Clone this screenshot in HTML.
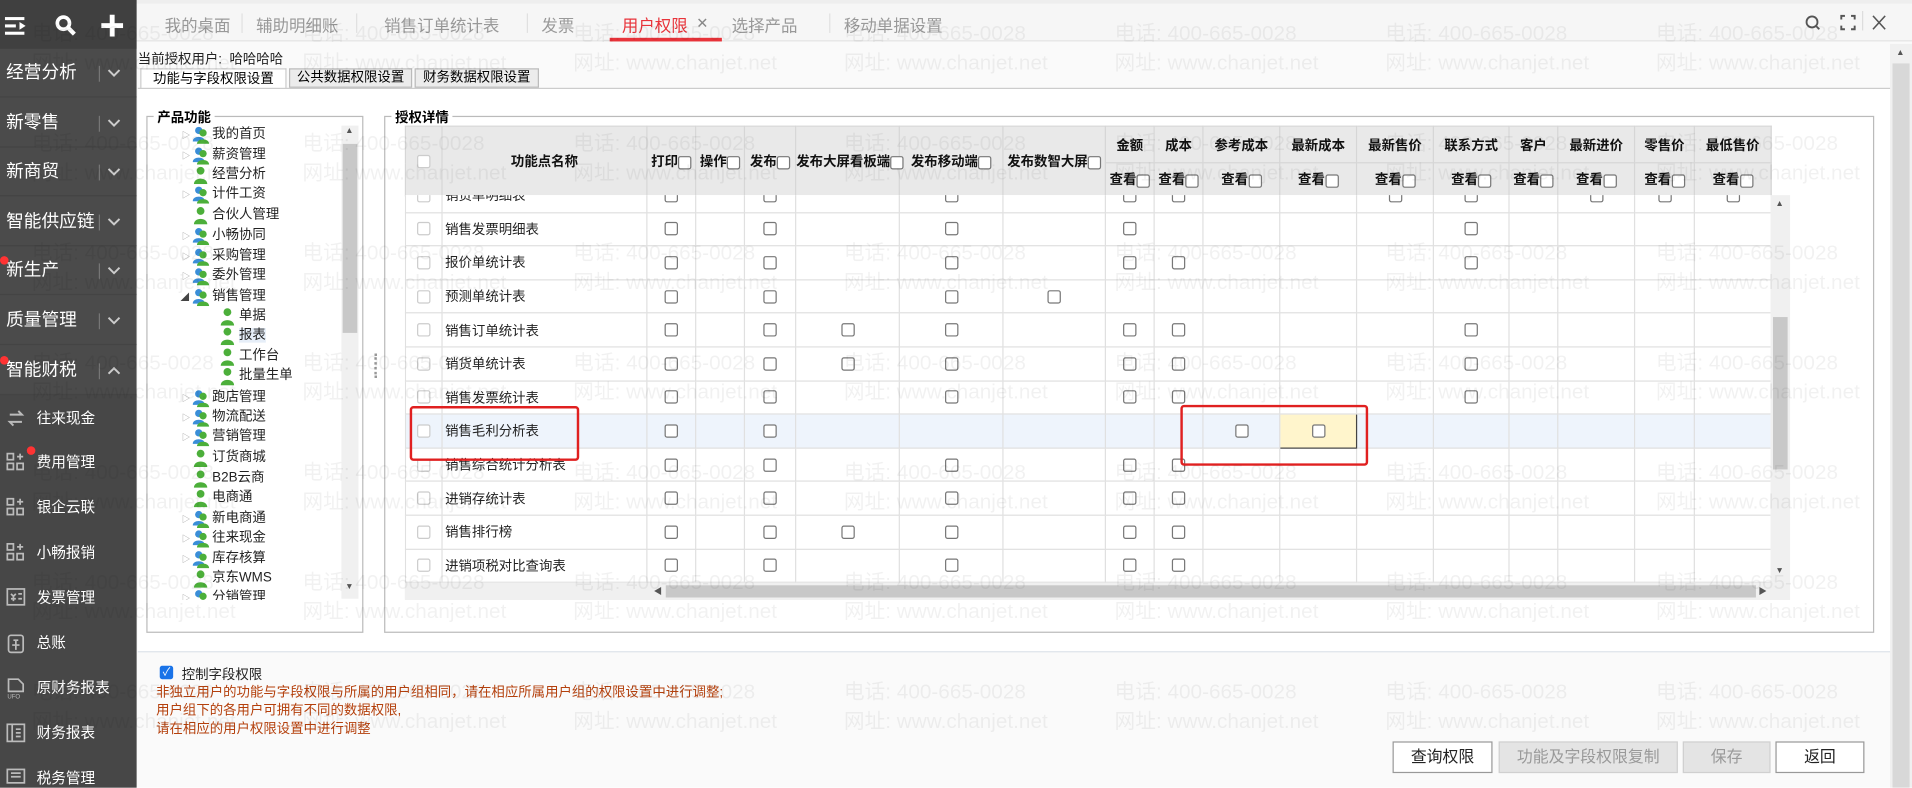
<!DOCTYPE html>
<html><head><meta charset="utf-8">
<style>
*{box-sizing:border-box;margin:0;padding:0}
html,body{width:1912px;height:788px;overflow:hidden;background:#fff;font-family:"Liberation Sans","Noto Sans CJK SC",sans-serif}
#w{position:absolute;left:0;top:0;width:1568px;height:646px;transform:scale(1.21939);transform-origin:0 0;background:#fafafa;overflow:hidden}
.a{position:absolute}
#sb{left:0;top:0;width:112px;height:646px;background:#4b4b4b;color:#fff}
#sbt{left:0;top:0;width:112px;height:40px;background:#404040}
.mi{position:absolute;left:0;width:112px;height:40px;font-size:14.5px;line-height:40px;padding-left:5px;border-bottom:1px solid #444}
.mi .dv{position:absolute;left:81px;top:14px;width:1px;height:13px;background:#777}
.mi svg{position:absolute;left:88px;top:16px}
.si{position:absolute;left:0;width:112px;height:37px;font-size:12px;line-height:37px;padding-left:30px;color:#fff}
.si svg{position:absolute;left:5px;top:10px}
.dot{position:absolute;width:7px;height:7px;border-radius:50%;background:#f33}
.tab{position:absolute;top:10px;font-size:13.5px;color:#999}
.sep{position:absolute;top:11px;width:1px;height:16px;background:#e0e0e0}
.cb{display:inline-block;width:11px;height:11px;border:1px solid #777;border-radius:2px;background:#fff;vertical-align:middle}
.cbg{border-color:#ccc}
.tr{position:absolute;font-size:11px;color:#222;height:16px;line-height:16px}
.tr .ic{display:inline-block;width:14px;height:15px;vertical-align:middle;margin-right:2px}
.tri{position:absolute;font-size:7px;color:#999}
table{border-collapse:collapse;table-layout:fixed}
#th td{background:#e9e9e9;border:1px solid #d6d6d6;font-size:11px;color:#111;text-align:center;padding:0;white-space:nowrap;font-weight:bold}
#tb td{border:1px solid #e0e0e0;font-size:11px;color:#222;text-align:center;padding:0;height:27.6px;white-space:nowrap;background:#fff}
#tb td.n{text-align:left;padding-left:2px}
#tb tr.hl td{background:#eef4fc}
.wm{position:absolute;left:0;width:1600px;font-size:17px;color:rgba(0,0,0,0.055);white-space:nowrap;pointer-events:none}
.wm span{display:inline-block;width:222px}
.btn{position:absolute;top:608px;height:26px;font-size:13px;line-height:24px;text-align:center;border:1px solid #999;background:#fff;color:#222}
.btn.d{background:#e4e4e4;color:#999;border-color:#d0d0d0}
</style></head><body><div id="w">

<div class="a" style="left:112px;top:0;width:1456px;height:34px;background:#f6f6f6;border-bottom:1px solid #e4e4e4"></div>
<div class="a" style="left:112px;top:0;width:1456px;height:3px;background:#eee"></div>
<div class="tab" style="left:135px">我的桌面</div><div class="sep" style="left:198px"></div>
<div class="tab" style="left:210px">辅助明细账</div><div class="sep" style="left:292px"></div>
<div class="tab" style="left:315px">销售订单统计表</div><div class="sep" style="left:432px"></div>
<div class="tab" style="left:444px">发票</div>
<div class="tab" style="left:510px;color:#e8333a">用户权限</div>
<div class="tab" style="left:571px;font-size:12px;top:12px;color:#888">✕</div>
<div class="a" style="left:500px;top:31px;width:92px;height:3px;background:#e8333a"></div>
<div class="tab" style="left:600px">选择产品</div><div class="sep" style="left:680px"></div>
<div class="tab" style="left:692px">移动单据设置</div>
<svg class="a" style="left:1480px;top:12px" width="14" height="14"><circle cx="6" cy="6" r="4.5" fill="none" stroke="#555" stroke-width="1.5"/><line x1="9.5" y1="9.5" x2="12" y2="12" stroke="#555" stroke-width="1.5"/></svg>
<svg class="a" style="left:1509px;top:12px" width="13" height="13" fill="none" stroke="#555" stroke-width="1.6"><path d="M1 4V1h3M9 1h3v3M12 9v3H9M4 12H1V9"/></svg>
<div class="a" style="left:1527px;top:9px;width:1px;height:16px;background:#ddd"></div>
<svg class="a" style="left:1535px;top:12px" width="12" height="13" stroke="#555" stroke-width="1.3"><path d="M1 1l10 11M11 1L1 12"/></svg>

<div class="a" style="left:1550px;top:36px;width:18px;height:610px;background:#f0f0f0"></div>
<div class="a" style="left:1552px;top:52px;width:14px;height:594px;background:#d8d8d8"></div>
<div class="a" style="left:1555px;top:40px;font-size:7px;color:#555">▲</div>

<div class="a" style="left:113px;top:40px;font-size:11px;color:#222">当前授权用户: &nbsp;哈哈哈哈</div>
<div class="a" style="left:115px;top:56px;width:120px;height:17px;background:#fff;border:1px solid #ccc;border-bottom:none;font-size:11px;line-height:16px;text-align:center">功能与字段权限设置</div>
<div class="a" style="left:237px;top:56px;width:101px;height:16px;background:#ececec;border:1px solid #bbb;font-size:11px;line-height:15px;text-align:center">公共数据权限设置</div>
<div class="a" style="left:340px;top:56px;width:102px;height:16px;background:#ececec;border:1px solid #bbb;font-size:11px;line-height:15px;text-align:center">财务数据权限设置</div>
<div class="a" style="left:113px;top:72px;width:1437px;height:1px;background:#ccc"></div>
<div class="a" style="left:113px;top:73px;width:1437px;height:462px;background:#fff;border-bottom:1px solid #dde3ea"></div>

<div class="a" style="left:120px;top:95px;width:178px;height:424px;border:1px solid #bbb"></div>
<div class="a" style="left:126px;top:88px;padding:0 3px;background:#fff;font-size:11px;font-weight:bold">产品功能</div>
<div class="a" style="left:280px;top:103px;width:14px;height:388px;background:#f0f0f0"></div>
<div class="a" style="left:281px;top:118px;width:12px;height:155px;background:#c8c8c8"></div>
<div class="a" style="left:283px;top:104px;font-size:7px;color:#555">▲</div>
<div class="a" style="left:283px;top:478px;font-size:7px;color:#555">▼</div>
<div class="a" style="left:307px;top:290px;width:2px;height:20px;border-left:2px dotted #999"></div>

<div class="a" style="left:315px;top:95px;width:1222px;height:424px;border:1px solid #bbb"></div>
<div class="a" style="left:321px;top:88px;padding:0 3px;background:#fff;font-size:11px;font-weight:bold">授权详情</div>

<table id="th" class="a" style="left:332px;top:103px;width:1120px">
<colgroup><col style="width:30px"><col style="width:168px"><col style="width:40px"><col style="width:40px"><col style="width:42px"><col style="width:85px"><col style="width:85px"><col style="width:84px"><col style="width:40px"><col style="width:40px"><col style="width:63px"><col style="width:63px"><col style="width:63px"><col style="width:62px"><col style="width:40px"><col style="width:63px"><col style="width:49px"><col style="width:63px"></colgroup>
<tr style="height:30px"><td rowspan="2"><span class="cb cbg"></span></td><td rowspan="2">功能点名称</td><td rowspan="2">打印<span class="cb"></span></td><td rowspan="2">操作<span class="cb"></span></td><td rowspan="2">发布<span class="cb"></span></td><td rowspan="2">发布大屏看板端<span class="cb"></span></td><td rowspan="2">发布移动端<span class="cb"></span></td><td rowspan="2">发布数智大屏<span class="cb"></span></td><td>金额</td><td>成本</td><td>参考成本</td><td>最新成本</td><td>最新售价</td><td>联系方式</td><td>客户</td><td>最新进价</td><td>零售价</td><td>最低售价</td></tr>
<tr style="height:27px"><td>查看<span class="cb"></span></td><td>查看<span class="cb"></span></td><td>查看<span class="cb"></span></td><td>查看<span class="cb"></span></td><td>查看<span class="cb"></span></td><td>查看<span class="cb"></span></td><td>查看<span class="cb"></span></td><td>查看<span class="cb"></span></td><td>查看<span class="cb"></span></td><td>查看<span class="cb"></span></td></tr>
</table>

<div class="a" style="left:332px;top:160px;width:1120px;height:318px;overflow:hidden;background:#fff">
<table id="tb" class="a" style="left:0;top:-14px;width:1120px">
<colgroup><col style="width:30px"><col style="width:168px"><col style="width:40px"><col style="width:40px"><col style="width:42px"><col style="width:85px"><col style="width:85px"><col style="width:84px"><col style="width:40px"><col style="width:40px"><col style="width:63px"><col style="width:63px"><col style="width:63px"><col style="width:62px"><col style="width:40px"><col style="width:63px"><col style="width:49px"><col style="width:63px"></colgroup>
<tr><td><span class="cb cbg"></span></td><td class="n">销货单明细表</td><td><span class="cb"></span></td><td></td><td><span class="cb"></span></td><td></td><td><span class="cb"></span></td><td></td><td><span class="cb"></span></td><td><span class="cb"></span></td><td></td><td></td><td><span class="cb"></span></td><td><span class="cb"></span></td><td></td><td><span class="cb"></span></td><td><span class="cb"></span></td><td><span class="cb"></span></td></tr>
<tr><td><span class="cb cbg"></span></td><td class="n">销售发票明细表</td><td><span class="cb"></span></td><td></td><td><span class="cb"></span></td><td></td><td><span class="cb"></span></td><td></td><td><span class="cb"></span></td><td></td><td></td><td></td><td></td><td><span class="cb"></span></td><td></td><td></td><td></td><td></td></tr>
<tr><td><span class="cb cbg"></span></td><td class="n">报价单统计表</td><td><span class="cb"></span></td><td></td><td><span class="cb"></span></td><td></td><td><span class="cb"></span></td><td></td><td><span class="cb"></span></td><td><span class="cb"></span></td><td></td><td></td><td></td><td><span class="cb"></span></td><td></td><td></td><td></td><td></td></tr>
<tr><td><span class="cb cbg"></span></td><td class="n">预测单统计表</td><td><span class="cb"></span></td><td></td><td><span class="cb"></span></td><td></td><td><span class="cb"></span></td><td><span class="cb"></span></td><td></td><td></td><td></td><td></td><td></td><td></td><td></td><td></td><td></td><td></td></tr>
<tr><td><span class="cb cbg"></span></td><td class="n">销售订单统计表</td><td><span class="cb"></span></td><td></td><td><span class="cb"></span></td><td><span class="cb"></span></td><td><span class="cb"></span></td><td></td><td><span class="cb"></span></td><td><span class="cb"></span></td><td></td><td></td><td></td><td><span class="cb"></span></td><td></td><td></td><td></td><td></td></tr>
<tr><td><span class="cb cbg"></span></td><td class="n">销货单统计表</td><td><span class="cb"></span></td><td></td><td><span class="cb"></span></td><td><span class="cb"></span></td><td><span class="cb"></span></td><td></td><td><span class="cb"></span></td><td><span class="cb"></span></td><td></td><td></td><td></td><td><span class="cb"></span></td><td></td><td></td><td></td><td></td></tr>
<tr><td><span class="cb cbg"></span></td><td class="n">销售发票统计表</td><td><span class="cb"></span></td><td></td><td><span class="cb"></span></td><td></td><td><span class="cb"></span></td><td></td><td><span class="cb"></span></td><td><span class="cb"></span></td><td></td><td></td><td></td><td><span class="cb"></span></td><td></td><td></td><td></td><td></td></tr>
<tr class="hl"><td><span class="cb cbg"></span></td><td class="n">销售毛利分析表</td><td><span class="cb"></span></td><td></td><td><span class="cb"></span></td><td></td><td></td><td></td><td></td><td></td><td><span class="cb"></span></td><td style="background:#fff5cc;border:1px solid #444"><span class="cb"></span></td><td></td><td></td><td></td><td></td><td></td><td></td></tr>
<tr><td><span class="cb cbg"></span></td><td class="n">销售综合统计分析表</td><td><span class="cb"></span></td><td></td><td><span class="cb"></span></td><td></td><td><span class="cb"></span></td><td></td><td><span class="cb"></span></td><td><span class="cb"></span></td><td></td><td></td><td></td><td></td><td></td><td></td><td></td><td></td></tr>
<tr><td><span class="cb cbg"></span></td><td class="n">进销存统计表</td><td><span class="cb"></span></td><td></td><td><span class="cb"></span></td><td></td><td><span class="cb"></span></td><td></td><td><span class="cb"></span></td><td><span class="cb"></span></td><td></td><td></td><td></td><td></td><td></td><td></td><td></td><td></td></tr>
<tr><td><span class="cb cbg"></span></td><td class="n">销售排行榜</td><td><span class="cb"></span></td><td></td><td><span class="cb"></span></td><td><span class="cb"></span></td><td><span class="cb"></span></td><td></td><td><span class="cb"></span></td><td><span class="cb"></span></td><td></td><td></td><td></td><td></td><td></td><td></td><td></td><td></td></tr>
<tr><td><span class="cb cbg"></span></td><td class="n">进销项税对比查询表</td><td><span class="cb"></span></td><td></td><td><span class="cb"></span></td><td></td><td><span class="cb"></span></td><td></td><td><span class="cb"></span></td><td><span class="cb"></span></td><td></td><td></td><td></td><td></td><td></td><td></td><td></td><td></td></tr>
<tr><td></td><td></td><td></td><td></td><td></td><td></td><td></td><td></td><td></td><td></td><td></td><td></td><td></td><td></td><td></td><td></td><td></td><td></td></tr>
</table></div>
<div class="a" style="left:1452px;top:160px;width:16px;height:318px;background:#f0f0f0"></div>
<div class="a" style="left:1454px;top:260px;width:12px;height:125px;background:#c8c8c8"></div>
<div class="a" style="left:1456px;top:164px;font-size:7px;color:#555">▲</div>
<div class="a" style="left:1456px;top:465px;font-size:7px;color:#555">▼</div>
<div class="a" style="left:332px;top:478px;width:1136px;height:14px;background:#f0f0f0"></div>
<div class="a" style="left:546px;top:480px;width:894px;height:10px;background:#c8c8c8"></div>
<div class="a" style="left:536px;top:480px;font-size:7px;color:#555">◀</div>
<div class="a" style="left:1442px;top:480px;font-size:7px;color:#555">▶</div>

<div class="a" style="left:336px;top:333px;width:139px;height:45px;border:2px solid #e02020;border-radius:3px"></div>
<div class="a" style="left:968px;top:332px;width:154px;height:50px;border:2px solid #e02020;border-radius:3px"></div>

<div class="a" style="left:131px;top:546px;width:11px;height:11px;background:#1a73e8;border-radius:2px;color:#fff;font-size:9px;line-height:11px;text-align:center">✓</div>
<div class="a" style="left:149px;top:545px;font-size:11px;color:#222">控制字段权限</div>
<div class="a" style="left:128px;top:561px;font-size:11px;color:#b4400c;line-height:15px">非独立用户的功能与字段权限与所属的用户组相同，请在相应所属用户组的权限设置中进行调整;<br>用户组下的各用户可拥有不同的数据权限,<br>请在相应的用户权限设置中进行调整</div>
<div class="btn" style="left:1142px;width:82px">查询权限</div>
<div class="btn d" style="left:1229px;width:147px">功能及字段权限复制</div>
<div class="btn d" style="left:1380px;width:72px">保存</div>
<div class="btn" style="left:1456px;width:73px">返回</div>

<div id="sb" class="a">
<div id="sbt" class="a"></div>
<svg class="a" style="left:4px;top:13px" width="20" height="16" fill="#fff"><rect x="0" y="1" width="16" height="2.5"/><rect x="0" y="7" width="9" height="2.5"/><rect x="0" y="13" width="16" height="2.5"/><path d="M12 5l5 3.2-5 3.2z"/></svg>
<svg class="a" style="left:45px;top:12px" width="18" height="18"><circle cx="7" cy="7" r="5" fill="none" stroke="#fff" stroke-width="3"/><line x1="11" y1="11" x2="16" y2="16" stroke="#fff" stroke-width="3.5"/></svg>
<svg class="a" style="left:83px;top:12px" width="18" height="18" fill="#fff"><rect x="7" y="0" width="4" height="18"/><rect x="0" y="7" width="18" height="4"/></svg>
<div class="mi" style="top:40px">经营分析<div class="dv"></div><svg width="11" height="8" fill="none" stroke="#ccc" stroke-width="1.6"><path d="M1 1.5l4.5 4.5 4.5-4.5"/></svg></div>
<div class="mi" style="top:81px">新零售<div class="dv"></div><svg width="11" height="8" fill="none" stroke="#ccc" stroke-width="1.6"><path d="M1 1.5l4.5 4.5 4.5-4.5"/></svg></div>
<div class="mi" style="top:121px">新商贸<div class="dv"></div><svg width="11" height="8" fill="none" stroke="#ccc" stroke-width="1.6"><path d="M1 1.5l4.5 4.5 4.5-4.5"/></svg></div>
<div class="mi" style="top:162px">智能供应链<div class="dv"></div><svg width="11" height="8" fill="none" stroke="#ccc" stroke-width="1.6"><path d="M1 1.5l4.5 4.5 4.5-4.5"/></svg></div>
<div class="mi" style="top:202px">新生产<div class="dv"></div><svg width="11" height="8" fill="none" stroke="#ccc" stroke-width="1.6"><path d="M1 1.5l4.5 4.5 4.5-4.5"/></svg></div>
<div class="mi" style="top:243px">质量管理<div class="dv"></div><svg width="11" height="8" fill="none" stroke="#ccc" stroke-width="1.6"><path d="M1 1.5l4.5 4.5 4.5-4.5"/></svg></div>
<div class="mi" style="top:284px">智能财税<div class="dv"></div><svg width="11" height="8" fill="none" stroke="#ccc" stroke-width="1.6"><path d="M1 6.5l4.5-4.5 4.5 4.5"/></svg></div>
<div class="dot" style="left:0;top:210px"></div>
<div class="dot" style="left:0;top:292px"></div>
<div class="a" style="left:0;top:324px;width:112px;height:322px;background:#474747"></div>
<div class="si" style="top:325px"><svg width="16" height="16" fill="none" stroke="#bbb" stroke-width="1.6"><path d="M3 5h10l-3-3M13 11H3l3 3"/></svg>往来现金</div>
<div class="si" style="top:361px"><svg width="16" height="16" fill="none" stroke="#bbb" stroke-width="1.4"><rect x="1" y="1" width="5" height="5"/><rect x="1" y="9" width="5" height="5"/><rect x="9" y="9" width="5" height="5"/><path d="M11.5 1v5M9 3.5h5"/></svg>费用管理</div>
<div class="dot" style="left:22px;top:366px"></div>
<div class="si" style="top:398px"><svg width="16" height="16" fill="none" stroke="#bbb" stroke-width="1.4"><rect x="1" y="1" width="5" height="5"/><rect x="1" y="9" width="5" height="5"/><rect x="9" y="9" width="5" height="5"/><path d="M11.5 1v5M9 3.5h5"/></svg>银企云联</div>
<div class="si" style="top:435px"><svg width="16" height="16" fill="none" stroke="#bbb" stroke-width="1.4"><rect x="1" y="1" width="5" height="5"/><rect x="1" y="9" width="5" height="5"/><rect x="9" y="9" width="5" height="5"/><path d="M11.5 1v5M9 3.5h5"/></svg>小畅报销</div>
<div class="si" style="top:472px"><svg width="18" height="16" fill="none" stroke="#bbb" stroke-width="1.4"><rect x="1" y="1" width="14" height="13"/><path d="M4 5l2 2 2-2M6 7v4M4 9h4M10 5h3M10 9h3"/></svg>发票管理</div>
<div class="si" style="top:509px"><svg width="16" height="18" fill="none" stroke="#bbb" stroke-width="1.4"><rect x="2" y="2" width="12" height="14" rx="2"/><path d="M6 6h4M8 6v8M5 10h6"/></svg>总账</div>
<div class="si" style="top:546px"><svg width="16" height="18" fill="none" stroke="#bbb" stroke-width="1.4"><path d="M2 1h8l4 4v6H2z"/><text x="1" y="17" font-size="5" fill="#bbb" stroke="none">UFO</text></svg>原财务报表</div>
<div class="si" style="top:583px"><svg width="16" height="16" fill="none" stroke="#bbb" stroke-width="1.4"><rect x="1" y="1" width="14" height="14"/><path d="M5 1v14M8 5h4M8 8h4M8 11h4"/></svg>财务报表</div>
<div class="si" style="top:620px"><svg width="16" height="14" fill="none" stroke="#bbb" stroke-width="1.4"><rect x="1" y="1" width="14" height="11"/><path d="M4 4h8M4 7h8"/></svg>税务管理</div>
</div>

<svg width="0" height="0" style="position:absolute"><defs>
<g id="g2"><circle cx="5" cy="4" r="3" fill="#3a8ed8"/><path d="M0 13c0-5 10-5 10 0z" fill="#3a8ed8"/><circle cx="8.5" cy="6" r="3" fill="#4caf3a"/><path d="M3.5 15c0-5 10-5 10 0z" fill="#4caf3a"/></g>
<g id="g1"><circle cx="6.5" cy="4" r="3.2" fill="#4caf3a"/><path d="M1 15c0-6 11-6 11 0z" fill="#4caf3a"/></g>
</defs></svg>
<div class="a" style="left:140px;top:102px;width:140px;height:390px;overflow:hidden">
<div class="tri" style="left:9px;top:4px">▷</div><div class="tr" style="left:18px;top:0"><svg class="ic" viewBox="0 0 14 15"><use href="#g2"/></svg>我的首页</div>
<div class="tri" style="left:9px;top:21px">▷</div><div class="tr" style="left:18px;top:17px"><svg class="ic" viewBox="0 0 14 15"><use href="#g2"/></svg>薪资管理</div>
<div class="tr" style="left:18px;top:33px"><svg class="ic" viewBox="0 0 14 15"><use href="#g1"/></svg>经营分析</div>
<div class="tri" style="left:9px;top:53px">▷</div><div class="tr" style="left:18px;top:49px"><svg class="ic" viewBox="0 0 14 15"><use href="#g2"/></svg>计件工资</div>
<div class="tr" style="left:18px;top:66px"><svg class="ic" viewBox="0 0 14 15"><use href="#g1"/></svg>合伙人管理</div>
<div class="tri" style="left:9px;top:87px">▷</div><div class="tr" style="left:18px;top:83px"><svg class="ic" viewBox="0 0 14 15"><use href="#g2"/></svg>小畅协同</div>
<div class="tri" style="left:9px;top:104px">▷</div><div class="tr" style="left:18px;top:100px"><svg class="ic" viewBox="0 0 14 15"><use href="#g2"/></svg>采购管理</div>
<div class="tri" style="left:9px;top:120px">▷</div><div class="tr" style="left:18px;top:116px"><svg class="ic" viewBox="0 0 14 15"><use href="#g2"/></svg>委外管理</div>
<div class="tri" style="left:8px;top:137px;color:#444">◢</div><div class="tr" style="left:18px;top:133px"><svg class="ic" viewBox="0 0 14 15"><use href="#g2"/></svg>销售管理</div>
<div class="tr" style="left:40px;top:149px"><svg class="ic" viewBox="0 0 14 15"><use href="#g1"/></svg>单据</div>
<div class="tr" style="left:40px;top:165px"><svg class="ic" viewBox="0 0 14 15"><use href="#g1"/></svg><span style="background:#e6eef8">报表</span></div>
<div class="tr" style="left:40px;top:182px"><svg class="ic" viewBox="0 0 14 15"><use href="#g1"/></svg>工作台</div>
<div class="tr" style="left:40px;top:198px"><svg class="ic" viewBox="0 0 14 15"><use href="#g1"/></svg>批量生单</div>
<div class="tri" style="left:9px;top:220px">▷</div><div class="tr" style="left:18px;top:216px"><svg class="ic" viewBox="0 0 14 15"><use href="#g2"/></svg>跑店管理</div>
<div class="tri" style="left:9px;top:236px">▷</div><div class="tr" style="left:18px;top:232px"><svg class="ic" viewBox="0 0 14 15"><use href="#g2"/></svg>物流配送</div>
<div class="tri" style="left:9px;top:252px">▷</div><div class="tr" style="left:18px;top:248px"><svg class="ic" viewBox="0 0 14 15"><use href="#g2"/></svg>营销管理</div>
<div class="tr" style="left:18px;top:265px"><svg class="ic" viewBox="0 0 14 15"><use href="#g1"/></svg>订货商城</div>
<div class="tr" style="left:18px;top:282px"><svg class="ic" viewBox="0 0 14 15"><use href="#g1"/></svg>B2B云商</div>
<div class="tr" style="left:18px;top:298px"><svg class="ic" viewBox="0 0 14 15"><use href="#g1"/></svg>电商通</div>
<div class="tri" style="left:9px;top:319px">▷</div><div class="tr" style="left:18px;top:315px"><svg class="ic" viewBox="0 0 14 15"><use href="#g2"/></svg>新电商通</div>
<div class="tri" style="left:9px;top:335px">▷</div><div class="tr" style="left:18px;top:331px"><svg class="ic" viewBox="0 0 14 15"><use href="#g2"/></svg>往来现金</div>
<div class="tri" style="left:9px;top:352px">▷</div><div class="tr" style="left:18px;top:348px"><svg class="ic" viewBox="0 0 14 15"><use href="#g2"/></svg>库存核算</div>
<div class="tr" style="left:18px;top:364px"><svg class="ic" viewBox="0 0 14 15"><use href="#g1"/></svg>京东WMS</div>
<div class="tri" style="left:9px;top:384px">▷</div><div class="tr" style="left:18px;top:380px"><svg class="ic" viewBox="0 0 14 15"><use href="#g2"/></svg>分销管理</div>
</div>

<div class="wm" style="top:13px;left:26px"><span>电话: 400-665-0028</span><span>电话: 400-665-0028</span><span>电话: 400-665-0028</span><span>电话: 400-665-0028</span><span>电话: 400-665-0028</span><span>电话: 400-665-0028</span><span>电话: 400-665-0028</span></div>
<div class="wm" style="top:37px;left:26px"><span>网址: www.chanjet.net</span><span>网址: www.chanjet.net</span><span>网址: www.chanjet.net</span><span>网址: www.chanjet.net</span><span>网址: www.chanjet.net</span><span>网址: www.chanjet.net</span><span>网址: www.chanjet.net</span></div>
<div class="wm" style="top:103px;left:26px"><span>电话: 400-665-0028</span><span>电话: 400-665-0028</span><span>电话: 400-665-0028</span><span>电话: 400-665-0028</span><span>电话: 400-665-0028</span><span>电话: 400-665-0028</span><span>电话: 400-665-0028</span></div>
<div class="wm" style="top:127px;left:26px"><span>网址: www.chanjet.net</span><span>网址: www.chanjet.net</span><span>网址: www.chanjet.net</span><span>网址: www.chanjet.net</span><span>网址: www.chanjet.net</span><span>网址: www.chanjet.net</span><span>网址: www.chanjet.net</span></div>
<div class="wm" style="top:193px;left:26px"><span>电话: 400-665-0028</span><span>电话: 400-665-0028</span><span>电话: 400-665-0028</span><span>电话: 400-665-0028</span><span>电话: 400-665-0028</span><span>电话: 400-665-0028</span><span>电话: 400-665-0028</span></div>
<div class="wm" style="top:217px;left:26px"><span>网址: www.chanjet.net</span><span>网址: www.chanjet.net</span><span>网址: www.chanjet.net</span><span>网址: www.chanjet.net</span><span>网址: www.chanjet.net</span><span>网址: www.chanjet.net</span><span>网址: www.chanjet.net</span></div>
<div class="wm" style="top:283px;left:26px"><span>电话: 400-665-0028</span><span>电话: 400-665-0028</span><span>电话: 400-665-0028</span><span>电话: 400-665-0028</span><span>电话: 400-665-0028</span><span>电话: 400-665-0028</span><span>电话: 400-665-0028</span></div>
<div class="wm" style="top:307px;left:26px"><span>网址: www.chanjet.net</span><span>网址: www.chanjet.net</span><span>网址: www.chanjet.net</span><span>网址: www.chanjet.net</span><span>网址: www.chanjet.net</span><span>网址: www.chanjet.net</span><span>网址: www.chanjet.net</span></div>
<div class="wm" style="top:373px;left:26px"><span>电话: 400-665-0028</span><span>电话: 400-665-0028</span><span>电话: 400-665-0028</span><span>电话: 400-665-0028</span><span>电话: 400-665-0028</span><span>电话: 400-665-0028</span><span>电话: 400-665-0028</span></div>
<div class="wm" style="top:397px;left:26px"><span>网址: www.chanjet.net</span><span>网址: www.chanjet.net</span><span>网址: www.chanjet.net</span><span>网址: www.chanjet.net</span><span>网址: www.chanjet.net</span><span>网址: www.chanjet.net</span><span>网址: www.chanjet.net</span></div>
<div class="wm" style="top:463px;left:26px"><span>电话: 400-665-0028</span><span>电话: 400-665-0028</span><span>电话: 400-665-0028</span><span>电话: 400-665-0028</span><span>电话: 400-665-0028</span><span>电话: 400-665-0028</span><span>电话: 400-665-0028</span></div>
<div class="wm" style="top:487px;left:26px"><span>网址: www.chanjet.net</span><span>网址: www.chanjet.net</span><span>网址: www.chanjet.net</span><span>网址: www.chanjet.net</span><span>网址: www.chanjet.net</span><span>网址: www.chanjet.net</span><span>网址: www.chanjet.net</span></div>
<div class="wm" style="top:553px;left:26px"><span>电话: 400-665-0028</span><span>电话: 400-665-0028</span><span>电话: 400-665-0028</span><span>电话: 400-665-0028</span><span>电话: 400-665-0028</span><span>电话: 400-665-0028</span><span>电话: 400-665-0028</span></div>
<div class="wm" style="top:577px;left:26px"><span>网址: www.chanjet.net</span><span>网址: www.chanjet.net</span><span>网址: www.chanjet.net</span><span>网址: www.chanjet.net</span><span>网址: www.chanjet.net</span><span>网址: www.chanjet.net</span><span>网址: www.chanjet.net</span></div>

</div></body></html>
